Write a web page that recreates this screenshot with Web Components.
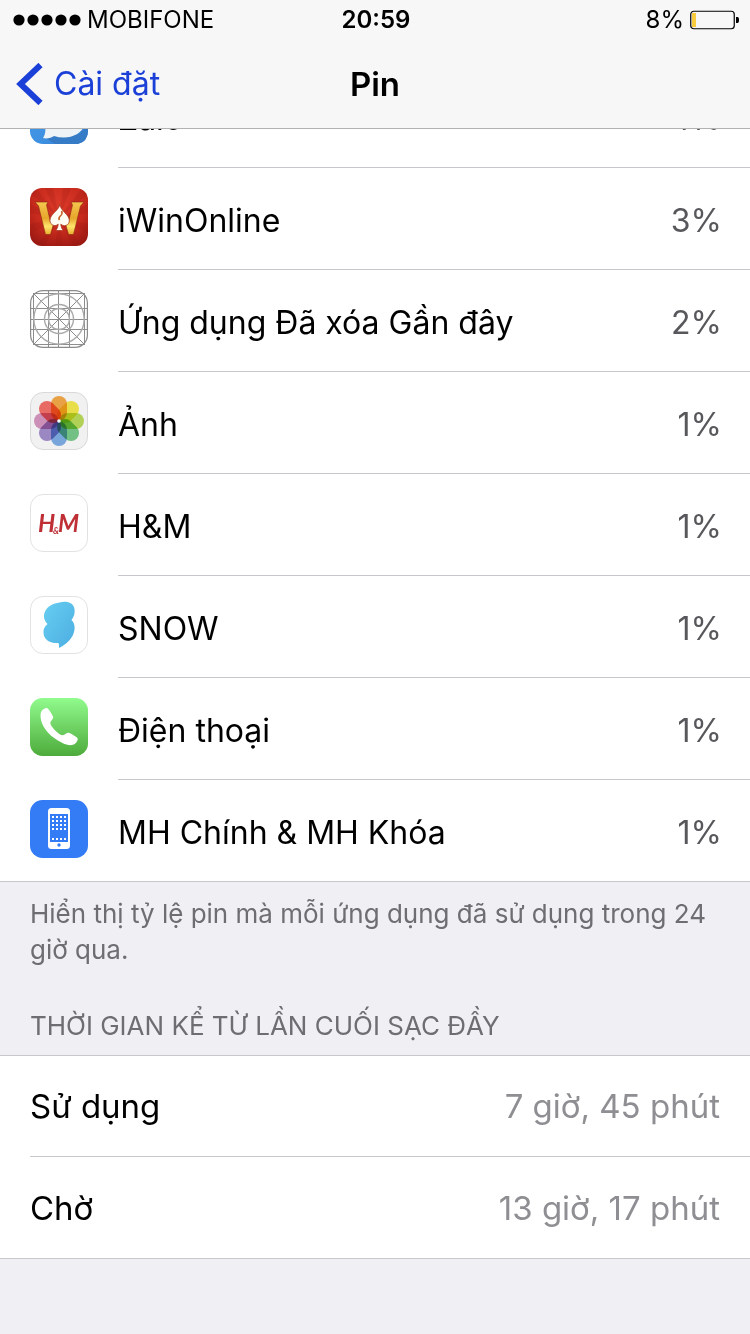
<!DOCTYPE html>
<html lang="vi">
<head>
<meta charset="utf-8">
<meta name="viewport" content="width=device-width">
<title>Pin</title>
<style>
  html { background: #efeff4; }
  body { margin: 0; font-family: Inter, "Noto Sans", sans-serif; color: #000; }
</style>
</head>
<body>
<battery-page></battery-page>

<template id="t-page">
  <style>
    :host { display: block; min-height: 100vh; background: #efeff4; }
    main { display: block; margin-top: -63px; }
    p { margin: 0; padding: 14px 30px 0; font-size: 26px; line-height: 36px; color: #6d6d72; }
    h2 { margin: 0; padding: 40px 30px 11px; font-size: 26px; line-height: 36px; font-weight: 400; color: #6d6d72; }
  </style>
  <top-bar></top-bar>
  <main>
    <row-group>
      <app-row value="4%"><app-icon slot="icon" name="zalo"></app-icon>Zalo</app-row>
      <app-row value="3%"><app-icon slot="icon" name="iwin"></app-icon>iWinOnline</app-row>
      <app-row value="2%"><app-icon slot="icon" name="deleted"></app-icon>Ứng dụng Đã xóa Gần đây</app-row>
      <app-row value="1%"><app-icon slot="icon" name="photos"></app-icon>Ảnh</app-row>
      <app-row value="1%"><app-icon slot="icon" name="hm"></app-icon>H&amp;M</app-row>
      <app-row value="1%"><app-icon slot="icon" name="snow"></app-icon>SNOW</app-row>
      <app-row value="1%"><app-icon slot="icon" name="phone"></app-icon>Điện thoại</app-row>
      <app-row value="1%" last><app-icon slot="icon" name="home"></app-icon>MH Chính &amp; MH Khóa</app-row>
    </row-group>
    <p>Hiển thị tỷ lệ pin mà mỗi ứng dụng đã sử dụng trong 24 giờ qua.</p>
    <h2>THỜI GIAN KỂ TỪ LẦN CUỐI SẠC ĐẦY</h2>
    <row-group topline>
      <app-row value="7 giờ, 45 phút" plain>Sử dụng</app-row>
      <app-row value="13 giờ, 17 phút" plain last>Chờ</app-row>
    </row-group>
  </main>
</template>

<template id="t-top">
  <style>
    :host { display: block; position: sticky; top: 0; z-index: 1; background: #f7f7f7; border-bottom: 1px solid #b2b2b2; }
    .status, nav { display: grid; grid-template-columns: 1fr auto 1fr; align-items: center; }
    .status { height: 40px; padding: 0 11px 0 13px; font-size: 24px; line-height: 40px; }
    .left, .right { display: flex; align-items: center; gap: 6px; }
    .right { justify-content: flex-end; }
    .time { font-weight: 600; }
    svg { display: block; flex: none; }
    nav { height: 88px; padding: 0 16px; }
    a { display: flex; align-items: center; gap: 10px; color: #1a40d8; text-decoration: none; font-size: 32px; line-height: 40px; justify-self: start; }
    h1 { margin: 0; font-size: 33px; line-height: 44px; font-weight: 600; }
  </style>
  <div class="status">
    <div class="left">
      <svg width="68" height="12" aria-hidden="true"><circle cx="6" cy="6" r="5.6"/><circle cx="20" cy="6" r="5.6"/><circle cx="34" cy="6" r="5.6"/><circle cx="48" cy="6" r="5.6"/><circle cx="62" cy="6" r="5.6"/></svg>
      <span>MOBIFONE</span>
    </div>
    <span class="time">20:59</span>
    <div class="right">
      <span>8%</span>
      <svg width="49" height="20" aria-hidden="true"><rect x=".75" y="1.25" width="43.5" height="17.5" rx="3" fill="none" stroke="#000" stroke-width="1.2"/><rect x="2" y="3" width="4" height="14" fill="#f9cc3f"/><path d="M46 7h1.5q1.5 0 1.5 3t-1.5 3H46z"/></svg>
    </div>
  </div>
  <nav>
    <a href="#settings"><svg width="28" height="42" viewBox="0 0 28 42" aria-hidden="true"><path d="M24.500 2 4.500 21l20 19" fill="none" stroke="#1a40d8" stroke-width="6"/></svg><span>Cài đặt</span></a>
    <h1>Pin</h1>
  </nav>
</template>

<template id="t-group">
  <style>
    :host { display: block; background: #fff; border-bottom: 1px solid #c8c7cc; }
    :host([topline]) { border-top: 1px solid #c8c7cc; }
  </style>
  <slot></slot>
</template>

<template id="t-row">
  <style>
    :host { display: flex; gap: 30px; padding-left: 30px; font-size: 32px; line-height: 44px; }
    ::slotted(app-icon) { margin-top: 20px; }
    :host([plain]) { gap: 0; font-size: 33px; }
    .body { flex: 1; display: flex; justify-content: space-between; align-items: center; box-sizing: border-box; height: 102px; padding: 4px 28px 0 0; border-bottom: 1px solid #c8c7cc; }
    :host([plain]) .body { height: 101px; padding: 0 30px 0 0; }
    :host([last]) .body { height: 101px; border-bottom: 0; }
    .value { color: #58585c; }
    :host([plain]) .value { color: #8e8e93; }
  </style>
  <slot name="icon"></slot>
  <div class="body"><span><slot></slot></span><span class="value"></span></div>
</template>

<script>
const ICONS = {
  zalo: `<defs><linearGradient id="z" x2="1" y2="1"><stop stop-color="#4a9cea"/><stop offset=".6" stop-color="#3d8fe0"/><stop offset="1" stop-color="#3579c4"/></linearGradient></defs>
    <rect width="58" height="58" rx="13" fill="url(#z)"/>
    <path d="M14 51 25 58H48Q58 56 58 44V40L50 48Z" fill="#367bc5"/>
    <path d="M15 40C4 28 12 9 31 9s28 15 24 29c-4 12-18 16-31 12-3 2-7 3-11 2 2-3 3-7 2-12z" fill="#edf3f7"/>`,
  iwin: `<defs><radialGradient id="r" cx=".5" cy=".3" r=".8"><stop stop-color="#dc3a29"/><stop offset=".55" stop-color="#c72a1d"/><stop offset="1" stop-color="#951712"/></radialGradient>
    <linearGradient id="g" x2="0" y2="1"><stop stop-color="#f5c64e"/><stop offset=".5" stop-color="#e7a62c"/><stop offset=".75" stop-color="#ffe56c"/><stop offset="1" stop-color="#e9ae2f"/></linearGradient>
    <clipPath id="c"><rect width="58" height="58" rx="12"/></clipPath></defs>
    <g clip-path="url(#c)"><rect width="58" height="58" fill="url(#r)"/>
    <path d="M29 30 0 5V0h6zM29 30 15 0h8zM29 30 33 0h8zM29 30 52 0h6v6zM29 30 58 16v9zM29 30 58 36v10zM29 30 52 58h-9zM29 30 33 58h-8zM29 30 15 58H6zM29 30 0 46V36zM29 30 0 25v-9z" fill="#8f1410" opacity=".18"/></g>
    <g fill="url(#g)" stroke="#8b2410" stroke-width=".6"><path d="M5 14h13l-1.500 3 4 17 3 2-3 10.500h-5L8.500 18z"/><path d="M54 14H41l1.500 3-4 17-3 2 3 10.500h5L50.500 18z"/></g>
    <path d="M30 16c-1 7-10 9.500-10 16.500 0 5 6 6.500 8.200 3.500-.2 3-1 4.700-2.500 6.500h7.600c-1.500-1.800-2.300-3.500-2.500-6.500 2.200 3 8.500 2 8.500-3.500 0-6.500-9.500-9.500-9.300-16.500z" fill="#fffdf3" stroke="#a33017" stroke-width=".7"/>
    <path d="M31.500 23c3 5-5 5-2 9" fill="none" stroke="#c7662c" stroke-width="1.600"/>`,
  deleted: `<rect x=".6" y=".6" width="56.800" height="56.800" rx="12.500" fill="#fff" stroke="#8b8b8b" stroke-width="1.200"/>
    <g fill="none" stroke="#8d8d8d" stroke-width="1"><path d="M3.500 3v52M18.500 0v58M28.500 0v58M39.500 0v58M54.500 3v52M3 3.500h52M0 18.500h58M0 29.500h58M0 39.500h58M3 54.500h52M4 4l50 50M54 4 4 54"/></g>
    <g fill="none" stroke="#aaa" stroke-width="1.400"><circle cx="29" cy="29" r="25.200"/><circle cx="29" cy="29" r="14.500"/><circle cx="29" cy="29" r="10.500"/></g>`,
  photos: `<style>.p rect{mix-blend-mode:multiply}</style><rect x=".5" y=".5" width="57" height="57" rx="12.500" fill="#f1f1f2" stroke="#d9d9da"/>
    <g class="p">${["#f7ab4a","#f6eb4e","#bcdc5a","#7acb8b","#7fb0e6","#a48fcc","#d898c2","#f5706a"].map((c, i) =>
      `<rect x="21" y="4" width="16" height="24.500" rx="8" fill="${c}" transform="rotate(${i * 45} 29 29)"/>`).join("")}</g>
    <circle cx="29" cy="29" r="1.800" fill="#effcff"/>`,
  hm: `<rect x=".5" y=".5" width="57" height="57" rx="12.500" fill="#fff" stroke="#e2e2e3"/>
    <g fill="#be3035" font-family="Lato, sans-serif" font-style="italic" font-weight="700"><text x="8" y="38" font-size="24">H</text><text x="23" y="40" font-size="9">&amp;</text><text x="28" y="38" font-size="24">M</text></g>`,
  snow: `<defs><linearGradient id="s" x1="0" y1="0" x2="1" y2="1"><stop stop-color="#67cef1"/><stop offset="1" stop-color="#4caee2"/></linearGradient></defs>
    <rect x=".5" y=".5" width="57" height="57" rx="12.500" fill="#fff" stroke="#e2e2e3"/>
    <path d="M29.500 6.500C37 4.500 43.500 7 44.500 13c.6 4-.5 8-3 11 4 4 4 10 1 16-3 5.500-8 9-13.500 12 0-2 .2-3.500-.5-5C21 47.500 14 44.500 13.500 37c-.3-4 1-6.500 4-9-4-4-4.500-9-2-13.500C18 10 23 7.500 29.500 6.500z" fill="url(#s)"/>`,
  phone: `<defs><linearGradient id="h" x2="0" y2="1"><stop stop-color="#91fb8d"/><stop offset="1" stop-color="#4dab3b"/></linearGradient></defs>
    <rect width="58" height="58" rx="12.500" fill="url(#h)"/>
    <path d="M12 12.500c1.500-1.500 4-3 5.500-2.200 1.700 1.500 4.300 5.500 5.500 8.200.8 2-1.500 3.500-2.500 5.500-.8 2 1.800 5.500 5 8.700s6 5 8 4.300c2-.8 3.500-3 6-2 2.500 1.200 6.500 3.500 8 5 .8 1.500-.5 4-2.200 5.500-3 2.500-7.800 2-12.800-.5C21 39.500 13 31 11 22c-.8-4-.7-7.500 1-9.500z" fill="#fff"/>`,
  home: `<rect width="58" height="58" rx="12.500" fill="#347bf6"/><rect x="18" y="8" width="22" height="41" rx="3.500" fill="#fff"/><path d="M20 14h18v28H20z" fill="#347bf6"/>
    <g fill="#fff">${[16, 20, 24, 28, 38].map(y => [22, 26, 30, 34].map(x => `<rect x="${x}" y="${y}" width="2" height="2"/>`).join("")).join("")}</g><circle cx="29" cy="45" r="1.700" fill="#347bf6"/>`
};

class Templated extends HTMLElement {
  constructor() {
    super();
    this.attachShadow({ mode: "open" }).append(
      document.getElementById(this.constructor.template).content.cloneNode(true));
  }
}
customElements.define("app-icon", class extends HTMLElement {
  connectedCallback() {
    if (this.shadowRoot) return;
    this.attachShadow({ mode: "open" }).innerHTML =
      `<style>:host{display:block;flex:none;width:58px;height:58px}svg{display:block}</style>
       <svg width="58" height="58" viewBox="0 0 58 58" aria-hidden="true">${ICONS[this.getAttribute("name")]}</svg>`;
  }
});
customElements.define("app-row", class extends Templated {
  static template = "t-row";
  connectedCallback() {
    this.shadowRoot.querySelector(".value").textContent = this.getAttribute("value");
  }
});
customElements.define("row-group", class extends Templated { static template = "t-group"; });
customElements.define("top-bar", class extends Templated { static template = "t-top"; });
customElements.define("battery-page", class extends Templated { static template = "t-page"; });
</script>
</body>
</html>
